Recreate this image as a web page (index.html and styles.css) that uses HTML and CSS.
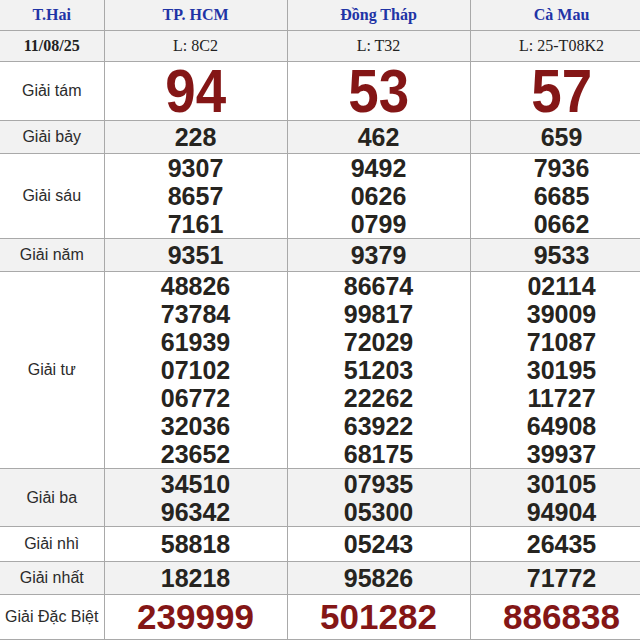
FILE: index.html
```html
<!DOCTYPE html>
<html lang="vi">
<head>
<meta charset="utf-8">
<title>Kết quả xổ số</title>
<link rel="stylesheet" href="styles.css">
</head>
<body>
<table class="kq">
  <colgroup>
    <col class="c-label">
    <col class="c-prov">
    <col class="c-prov">
    <col class="c-prov">
  </colgroup>
  <tr class="r-head shade">
    <th class="day">T.Hai</th>
    <th class="prov">TP. HCM</th>
    <th class="prov">Đồng Tháp</th>
    <th class="prov">Cà Mau</th>
  </tr>
  <tr class="r-date shade">
    <td class="date">11/08/25</td>
    <td class="code">L: 8C2</td>
    <td class="code">L: T32</td>
    <td class="code">L: 25-T08K2</td>
  </tr>
  <tr class="r-g8">
    <td class="lbl">Giải tám</td>
    <td class="big"><span class="big-txt">94</span></td>
    <td class="big"><span class="big-txt">53</span></td>
    <td class="big"><span class="big-txt">57</span></td>
  </tr>
  <tr class="r-one shade">
    <td class="lbl">Giải bảy</td>
    <td class="num">228</td>
    <td class="num">462</td>
    <td class="num">659</td>
  </tr>
  <tr class="r-multi">
    <td class="lbl">Giải sáu</td>
    <td class="num"><div>9307</div><div>8657</div><div>7161</div></td>
    <td class="num"><div>9492</div><div>0626</div><div>0799</div></td>
    <td class="num"><div>7936</div><div>6685</div><div>0662</div></td>
  </tr>
  <tr class="r-one shade">
    <td class="lbl">Giải năm</td>
    <td class="num">9351</td>
    <td class="num">9379</td>
    <td class="num">9533</td>
  </tr>
  <tr class="r-multi">
    <td class="lbl">Giải tư</td>
    <td class="num"><div>48826</div><div>73784</div><div>61939</div><div>07102</div><div>06772</div><div>32036</div><div>23652</div></td>
    <td class="num"><div>86674</div><div>99817</div><div>72029</div><div>51203</div><div>22262</div><div>63922</div><div>68175</div></td>
    <td class="num"><div>02114</div><div>39009</div><div>71087</div><div>30195</div><div>11727</div><div>64908</div><div>39937</div></td>
  </tr>
  <tr class="r-ba shade">
    <td class="lbl">Giải ba</td>
    <td class="num"><div>34510</div><div>96342</div></td>
    <td class="num"><div>07935</div><div>05300</div></td>
    <td class="num"><div>30105</div><div>94904</div></td>
  </tr>
  <tr class="r-nhi">
    <td class="lbl">Giải nhì</td>
    <td class="num">58818</td>
    <td class="num">05243</td>
    <td class="num">26435</td>
  </tr>
  <tr class="r-one shade">
    <td class="lbl">Giải nhất</td>
    <td class="num">18218</td>
    <td class="num">95826</td>
    <td class="num">71772</td>
  </tr>
  <tr class="r-db">
    <td class="lbl">Giải Đặc Biệt</td>
    <td class="special">239999</td>
    <td class="special">501282</td>
    <td class="special">886838</td>
  </tr>
</table>
</body>
</html>
```
FILE: styles.css
```css
html, body {
  margin: 0;
  padding: 0;
  background: #ffffff;
  overflow: hidden;
}

.kq {
  border-collapse: collapse;
  table-layout: fixed;
  width: 653px;
  margin-top: -1px;
  font-family: "Liberation Sans", Arial, sans-serif;
  color: #2a2a2a;
}

.c-label { width: 104px; }
.c-prov { width: 183px; }

.kq th,
.kq td {
  border: 1px solid #a9a9a9;
  padding: 0;
  text-align: center;
  vertical-align: middle;
}

.kq tr > :first-child { border-left: none; }

.shade { background: #f2f2f2; }

.r-head { height: 31px; }
.r-date { height: 31px; }
.r-g8 { height: 59px; }
.r-one { height: 33px; }
.r-ba { height: 58px; }
.r-nhi { height: 35px; }
.r-db { height: 45px; }

.day,
.prov {
  font-family: "Liberation Serif", "Times New Roman", serif;
  font-size: 16px;
  font-weight: bold;
  color: #1f34a6;
}

.date {
  font-family: "Liberation Serif", "Times New Roman", serif;
  font-size: 16px;
  font-weight: bold;
  color: #222222;
}

.code {
  font-family: "Liberation Serif", "Times New Roman", serif;
  font-size: 16px;
  color: #222222;
}

.lbl {
  font-size: 16px;
  color: #2b2b2b;
}

.num {
  font-size: 25px;
  font-weight: bold;
  line-height: 28px;
  color: #262420;
}

.big {
  font-size: 57px;
  font-weight: bold;
  line-height: 58px;
  color: #841616;
}

.big-txt {
  display: inline-block;
  transform: scale(0.96, 1.06);
}

.special {
  font-size: 35px;
  font-weight: bold;
  line-height: 40px;
  color: #841616;
}
```
